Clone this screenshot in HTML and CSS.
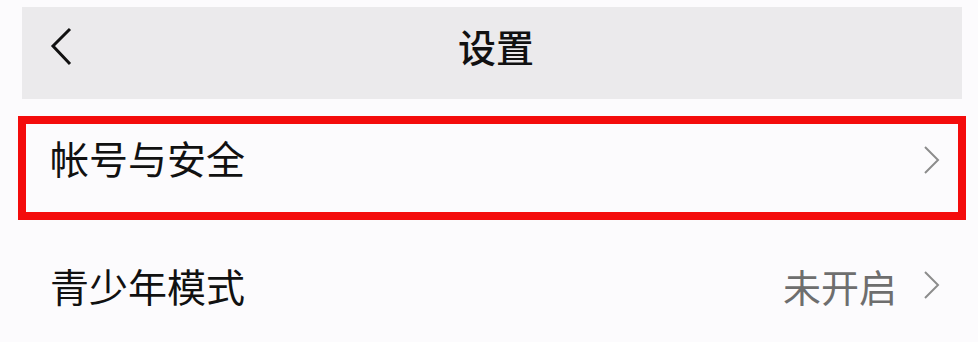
FILE: index.html
```html
<!DOCTYPE html>
<html>
<head>
  <meta charset="utf-8">
  <link rel="stylesheet" href="styles.css">
</head>
<body>
  <div class="topbar">
    <div class="back">
      <svg width="24" height="40" viewBox="0 0 24 40">
        <polyline points="20,2 3,19 20,37" fill="none" stroke="#111" stroke-width="3"/>
      </svg>
    </div>
    <div class="title">设置</div>
    <div></div>
  </div>

  <div class="highlight">
    <div class="row first">
      <span class="label">帐号与安全</span>
      <span class="arrow">
        <svg width="18" height="28" viewBox="0 0 18 28">
          <polyline points="2,1 15,14 2,27" fill="none" stroke="#8c8c8c" stroke-width="2"/>
        </svg>
      </span>
    </div>
  </div>

  <div class="row second">
    <span class="label">青少年模式</span>
    <span class="right">
      <span class="value">未开启</span>
      <span class="arrow">
        <svg width="18" height="28" viewBox="0 0 18 28">
          <polyline points="2,1 15,14 2,27" fill="none" stroke="#8c8c8c" stroke-width="2"/>
        </svg>
      </span>
    </span>
  </div>
</body>
</html>
```

FILE: styles.css
```css
body {
  margin: 0;
  padding: 0;
  background: #fcfbfd;
  font-family: "Noto Sans CJK SC", "Noto Sans", sans-serif;
  color: #111;
}

.topbar {
  display: grid;
  grid-template-columns: 1fr auto 1fr;
  align-items: center;
  margin: 7px 16px 0 22px;
  height: 92px;
  padding-bottom: 16px;
  box-sizing: border-box;
  background: #ebeaec;
}

.back {
  display: flex;
  padding-left: 28px;
  padding-top: 4px;
}

.title {
  font-size: 38px;
  font-weight: 500;
  padding-left: 8px;
}

.highlight {
  margin: 17px 12px 0 18px;
  height: 104px;
  box-sizing: border-box;
  border: 8px solid #f40c0c;
}

.row {
  display: flex;
  justify-content: space-between;
  align-items: center;
}

.row.first {
  height: 66px;
  padding: 0 17px 22px 24px;
}

.row.first .arrow {
  padding-top: 6px;
}

.row.second {
  height: 80px;
  margin-top: 25px;
  padding: 0 37px 0 50px;
}

.label {
  font-size: 39px;
}

.arrow {
  display: flex;
}

.right {
  display: flex;
  align-items: center;
  gap: 26px;
}

.value {
  font-size: 38px;
  color: #6e6e6e;
}
```
